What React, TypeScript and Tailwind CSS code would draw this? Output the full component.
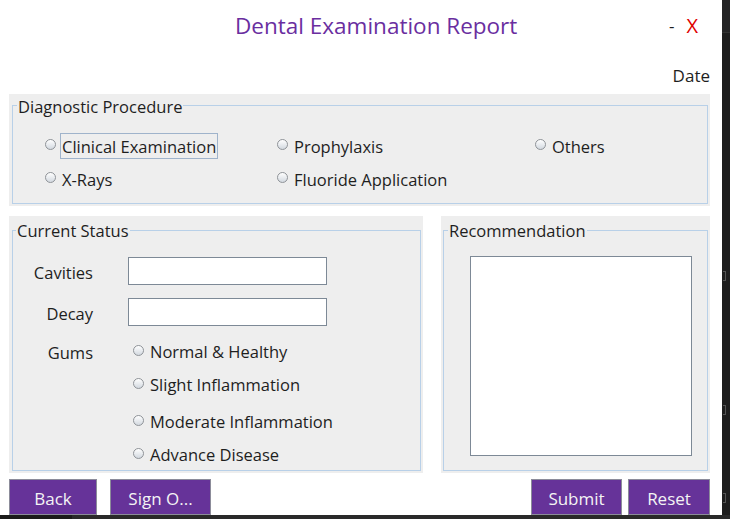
import React from "react";

function Radio({ label, focused = false }: { label: string; focused?: boolean }) {
  return (
    <label className="flex items-center h-[26px] whitespace-nowrap">
      <span className="w-[11px] h-[11px] rounded-full border border-[#8f9398] bg-gradient-to-b from-white to-[#d3d9e0] mb-[2px] shrink-0" />
      <span
        className={`ml-[4px] px-[1px] pt-[2px] leading-[22px] border ${
          focused ? "border-[#9fb3cb]" : "border-transparent"
        }`}
      >
        {label}
      </span>
    </label>
  );
}

function Button({ label, w }: { label: string; w: string }) {
  return (
    <button
      className={`${w} h-[36px] pt-[3px] bg-[#663399] border border-[#8c8c9a] text-[#f4f4f4] text-[17px] shrink-0`}
    >
      {label}
    </button>
  );
}

export default function App() {
  return (
    <div className="w-[730px] h-[519px] flex flex-col bg-[#1f1f1f] overflow-hidden font-['Open_Sans',sans-serif] text-[#1e1e1e] text-[16.5px]">
      <div className="flex h-[515px]">
        {/* window */}
        <div className="w-[722px] h-[515px] bg-white flex flex-col overflow-hidden">
          {/* header */}
          <div className="flex items-center h-[52px]">
            <div className="ml-[235px] text-[22.5px] text-[#6a2e9f]">Dental Examination Report</div>
            <div className="ml-auto text-[17px] mr-[12px]">-</div>
            <div className="mr-[24px] text-[20px] text-[#e00000]">X</div>
          </div>
          <div className="flex justify-end pr-[12px] h-[42px] items-center pt-[6px]">
            <span className="text-[17px]">Date</span>
          </div>

          {/* diagnostic procedure */}
          <div className="ml-[9px] w-[701px] h-[113px] bg-[#eeeeee] pl-[3px] pr-[2px] pt-[1px] pb-[2px] flex">
            <fieldset className="flex-1 border border-[#b8d0e8]">
              <legend className="ml-[4px] px-[1px] pt-[2px] leading-[20px]">Diagnostic Procedure</legend>
              <div className="flex flex-col gap-[7px] mt-[16px] pl-[32px]">
                <div className="flex">
                  <div className="w-[232px]">
                    <Radio label="Clinical Examination" focused />
                  </div>
                  <div className="w-[258px]">
                    <Radio label="Prophylaxis" />
                  </div>
                  <Radio label="Others" />
                </div>
                <div className="flex">
                  <div className="w-[232px]">
                    <Radio label="X-Rays" />
                  </div>
                  <Radio label="Fluoride Application" />
                </div>
              </div>
            </fieldset>
          </div>

          <div className="flex mt-[10px] h-[258px]">
            {/* current status */}
            <div className="ml-[9px] w-[414px] bg-[#eeeeee] pl-[3px] pr-[2px] pt-[3px] pb-[2px] flex">
              <fieldset className="flex-1 border border-[#b8d0e8]">
                <legend className="ml-[3px] px-[1px] pt-[2px] leading-[20px]">Current Status</legend>
                <div className="flex items-center mt-[16px] h-[28px]">
                  <span className="w-[80px] text-right pt-[4px] leading-[22px]">Cavities</span>
                  <input className="ml-[35px] w-[199px] h-[28px] bg-white border border-[#7d8996]" />
                </div>
                <div className="flex items-center mt-[13px] h-[28px]">
                  <span className="w-[80px] text-right pt-[4px] leading-[22px]">Decay</span>
                  <input className="ml-[35px] w-[199px] h-[28px] bg-white border border-[#7d8996]" />
                </div>
                <div className="flex mt-[12px]">
                  <span className="w-[80px] text-right leading-[26px] pt-[2px]">Gums</span>
                  <div className="ml-[40px] flex flex-col">
                    <Radio label="Normal & Healthy" />
                    <div className="mt-[7px]">
                      <Radio label="Slight Inflammation" />
                    </div>
                    <div className="mt-[11px]">
                      <Radio label="Moderate Inflammation" />
                    </div>
                    <div className="mt-[7px]">
                      <Radio label="Advance Disease" />
                    </div>
                  </div>
                </div>
              </fieldset>
            </div>

            {/* recommendation */}
            <div className="ml-[18px] w-[269px] bg-[#eeeeee] pl-[2px] pr-[2px] pt-[3px] pb-[2px] flex">
              <fieldset className="flex-1 border border-[#b8d0e8]">
                <legend className="ml-[4px] px-[1px] pt-[2px] leading-[20px]">Recommendation</legend>
                <textarea className="block ml-[26px] mt-[15px] w-[222px] h-[200px] bg-white border border-[#7d8996] resize-none" />
              </fieldset>
            </div>
          </div>

          {/* buttons */}
          <div className="flex mt-[6px] pr-[12px]">
            <div className="ml-[9px]">
              <Button label="Back" w="w-[88px]" />
            </div>
            <div className="ml-[13px]">
              <Button label="Sign O..." w="w-[101px]" />
            </div>
            <div className="ml-auto flex gap-[6px]">
              <Button label="Submit" w="w-[91px]" />
              <Button label="Reset" w="w-[82px]" />
            </div>
          </div>
        </div>

        {/* editor strip on the right */}
        <div className="flex-1 flex flex-col">
          <div className="h-[33px] bg-[#252526] border-b border-[#333333]" />
          <div className="flex-1 bg-[#1e1e1e] flex flex-col items-start pl-[1px]">
            <span className="mt-[238px] w-[3px] h-[10px] border border-l-0 border-[#555555]" />
            <span className="mt-[124px] w-[3px] h-[10px] border border-l-0 border-[#555555]" />
            <span className="mt-[78px] w-[3px] h-[10px] border border-l-0 border-[#555555]" />
          </div>
        </div>
      </div>
      <div className="flex h-[4px]">
        <div className="w-[72px] bg-[#1b1b1b]" />
        <div className="flex-1 bg-[#2a2a2a]" />
      </div>
    </div>
  );
}
